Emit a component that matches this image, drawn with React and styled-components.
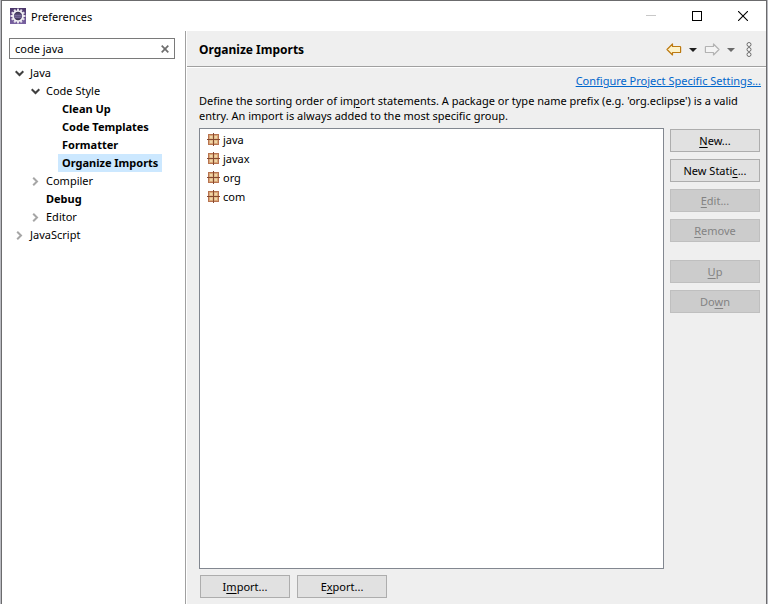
import React, { useState } from "react";
import styled, { createGlobalStyle, css } from "styled-components";

const ink = "#000000";
const face = "#efefef";
const line = "#a0a0a0";

const GlobalStyle = createGlobalStyle`
  *, *::before, *::after { box-sizing: border-box; }
  body {
    margin: 0;
    background: #b9bac0;
    color: ${ink};
    font: 11px/15px "Noto Sans", "Open Sans", sans-serif;
  }
  button, input { font: inherit; color: inherit; }
`;

const Window = styled.div`
  display: flex;
  flex-direction: column;
  min-height: 100vh;
  margin: 0 1px;
  background: #ffffff;
  border: 1px solid #6b6b6d;
  border-bottom: 0;
`;

const TitleBar = styled.header`
  display: flex;
  align-items: center;
  height: 30px;
  padding-left: 8px;
  gap: 5px;
`;

const WindowTitle = styled.h1`
  flex: 1;
  margin: 0;
  font-size: 11px;
  font-weight: 400;
`;

const CaptionButton = styled.button`
  display: grid;
  place-items: center;
  width: 46px;
  height: 28px;
  padding: 0;
  border: 0;
  background: none;
`;

const CaptionButtons = styled.div`
  display: flex;
`;

const Body = styled.div`
  display: flex;
  flex: 1;
`;

const Sidebar = styled.aside`
  width: 184px;
  flex: none;
  padding: 7px 10px 0 7px;
  border-right: 1px solid ${line};
`;

const SearchBox = styled.div`
  display: flex;
  align-items: center;
  height: 21px;
  border: 1px solid #7a7a7a;
`;

const SearchInput = styled.input`
  flex: 1;
  min-width: 0;
  padding: 0 5px;
  border: 0;
  outline: 0;
  background: none;
`;

const ClearButton = styled.button`
  display: grid;
  place-items: center;
  width: 18px;
  height: 19px;
  padding: 0;
  border: 0;
  background: none;
`;

const Tree = styled.ul`
  margin: 5px 0 0;
  padding: 0;
  list-style: none;
`;

const TreeRow = styled.li`
  display: flex;
  align-items: center;
  height: 18px;
  padding-left: ${(p) => 4 + p.$level * 16}px;
`;

const Twisty = styled.span`
  display: grid;
  place-items: center;
  width: 13px;
  height: 18px;
`;

const TreeLabel = styled.span`
  height: 18px;
  padding: 0 4px;
  line-height: 17px;
  white-space: nowrap;
  ${(p) => p.$bold && css`font-weight: 700;`}
  ${(p) => p.$selected && css`background: #cce8ff;`}
`;

const Page = styled.main`
  display: flex;
  flex: 1;
  flex-direction: column;
  min-width: 0;
  margin-left: 1px;
  background: ${face};
`;

const PageHeader = styled.div`
  display: flex;
  align-items: center;
  justify-content: space-between;
  height: 36px;
  padding: 2px 6px 0 12px;
  border-bottom: 1px solid ${line};
  box-shadow: 0 1px 0 #ffffff;
`;

const PageTitle = styled.h2`
  margin: 0;
  font-size: 12px;
  font-weight: 700;
`;

const NavBar = styled.div`
  display: flex;
  align-items: center;
`;

const ToolButton = styled.button`
  display: grid;
  place-items: center;
  width: ${(p) => p.$width}px;
  height: 22px;
  padding: 0;
  border: 0;
  background: none;
`;

const Content = styled.div`
  display: flex;
  flex: 1;
  flex-direction: column;
  padding: 6px 5px 6px 12px;
`;

const SettingsLink = styled.a`
  align-self: flex-end;
  color: #0066cc;
  text-decoration: underline;
  white-space: nowrap;
`;

const Description = styled.p`
  margin: 5px 0;
`;

const Editor = styled.div`
  display: flex;
  flex: 1;
  gap: 6px;
  padding-right: 1px;
`;

const PackageList = styled.ul`
  flex: 1;
  margin: 0;
  padding: 1px 7px;
  border: 1px solid #828790;
  background: #ffffff;
  list-style: none;
`;

const PackageRow = styled.li`
  display: flex;
  align-items: center;
  gap: 3px;
  height: 19px;
`;

const ButtonColumn = styled.div`
  display: flex;
  flex-direction: column;
  gap: 7px;
  padding-top: 1px;
`;

const ButtonGap = styled.div`
  height: 4px;
`;

const ButtonRow = styled.div`
  display: flex;
  gap: 7px;
  padding: 6px 1px 0;
`;

const PushButton = styled.button`
  width: 90px;
  height: 23px;
  padding: 0;
  border: 1px solid #adadad;
  background: #e1e1e1;
  text-align: center;
  &:disabled {
    border-color: #bfbfbf;
    background: #cccccc;
    color: #838383;
  }
`;

const Mnemonic = styled.span`
  text-decoration: underline;
  text-underline-offset: 2px;
`;

function Label({ text }) {
  const at = text.indexOf("&");
  if (at < 0) return text;
  return (
    <>
      {text.slice(0, at)}
      <Mnemonic>{text[at + 1]}</Mnemonic>
      {text.slice(at + 2)}
    </>
  );
}

const teeth = Array.from({ length: 12 }, (_, i) => i * 30);

function EclipseIcon() {
  return (
    <svg width="16" height="16" viewBox="0 0 16 16" aria-hidden="true">
      <defs>
        <linearGradient id="plum" x1="0" y1="0" x2="0" y2="1">
          <stop offset="0" stopColor="#4a3569" />
          <stop offset="1" stopColor="#7a63a3" />
        </linearGradient>
        <linearGradient id="moon" x1="0" y1="0" x2="0" y2="1">
          <stop offset="0" stopColor="#2c2440" />
          <stop offset="0.5" stopColor="#6a5c8c" />
          <stop offset="1" stopColor="#2c2440" />
        </linearGradient>
      </defs>
      <rect width="16" height="16" fill="url(#plum)" />
      {teeth.map((a) => (
        <rect key={a} x="7" y="0.6" width="2" height="2.4" fill="#e4dfea" transform={`rotate(${a} 8 8)`} />
      ))}
      <circle cx="8" cy="8" r="5" fill="url(#moon)" stroke="#f3f1f5" strokeWidth="1.7" />
      <path d="M4.5 7.5h7M4.5 9.5h7" stroke="#8778a8" strokeWidth="0.6" />
    </svg>
  );
}

function PackageIcon() {
  return (
    <svg width="13" height="13" viewBox="0 0 13 13" aria-hidden="true">
      <rect x="1.5" y="1.5" width="10" height="10" fill="#d9a777" stroke="#b87350" />
      <path d="M3 3h2v2H3zM8 3h2v2H8zM3 8h2v2H3zM8 8h2v2H8z" fill="#efd6a8" />
      <path d="M5 3h1v3H3V5h2zM7 3h1v2h2v1H7zM3 7h3v3H5V8H3zM7 7h3v1H8v2H7z" fill="#e6c08e" />
      <path d="M6.5 0v13M0 6.5h13" stroke="#85492f" />
    </svg>
  );
}

function Chevron({ open }) {
  return open ? (
    <svg width="9" height="7" viewBox="0 0 9 7" aria-hidden="true">
      <path d="M0.7 1.2l3.8 3.8 3.8-3.8" fill="none" stroke="#404040" strokeWidth="2" />
    </svg>
  ) : (
    <svg width="7" height="9" viewBox="0 0 7 9" aria-hidden="true">
      <path d="M1.2 0.7l3.8 3.8-3.8 3.8" fill="none" stroke="#a6a6a6" strokeWidth="2" />
    </svg>
  );
}

function BackArrow() {
  return (
    <svg width="16" height="13" viewBox="0 0 16 13" aria-hidden="true">
      <path d="M1 6.5L6.5 1v2.5H14q.6 0 .6.6v4.8q0 .6-.6.6H6.5V12z" fill="#fdf2c9" stroke="#bd7a11" strokeWidth="1.2" strokeLinejoin="round" />
    </svg>
  );
}

function ForwardArrow() {
  return (
    <svg width="16" height="13" viewBox="0 0 16 13" aria-hidden="true">
      <path d="M15 6.5L9.5 1v2.5H2q-.6 0-.6.6v4.8q0 .6.6.6h7.5V12z" fill="#f4f4f4" stroke="#b3b3b3" strokeWidth="1.2" strokeLinejoin="round" />
    </svg>
  );
}

function Caret({ color }) {
  return (
    <svg width="8" height="4" viewBox="0 0 8 4" aria-hidden="true">
      <path d="M0 0h8L4 4z" fill={color} />
    </svg>
  );
}

function MenuDots() {
  return (
    <svg width="6" height="15" viewBox="0 0 6 15" aria-hidden="true">
      {[2.5, 7.5, 12.5].map((y) => (
        <circle key={y} cx="3" cy={y} r="2" fill="#f6f6f6" stroke="#6d6d6d" />
      ))}
    </svg>
  );
}

const treeItems = [
  { label: "Java", level: 0, open: true },
  { label: "Code Style", level: 1, open: true },
  { label: "Clean Up", level: 2, bold: true },
  { label: "Code Templates", level: 2, bold: true },
  { label: "Formatter", level: 2, bold: true },
  { label: "Organize Imports", level: 2, bold: true, selected: true },
  { label: "Compiler", level: 1, open: false },
  { label: "Debug", level: 1, bold: true },
  { label: "Editor", level: 1, open: false },
  { label: "JavaScript", level: 0, open: false },
];

const packages = ["java", "javax", "org", "com"];

export default function App() {
  const [query, setQuery] = useState("code java");

  return (
    <>
      <GlobalStyle />
      <Window>
        <TitleBar>
          <EclipseIcon />
          <WindowTitle>Preferences</WindowTitle>
          <CaptionButtons>
            <CaptionButton aria-label="Minimize" disabled>
              <svg width="10" height="10" viewBox="0 0 10 10">
                <path d="M0 4.5h10" stroke="#c8c8c8" />
              </svg>
            </CaptionButton>
            <CaptionButton aria-label="Maximize">
              <svg width="10" height="10" viewBox="0 0 10 10">
                <rect x="0.5" y="0.5" width="9" height="9" fill="none" stroke="#000" />
              </svg>
            </CaptionButton>
            <CaptionButton aria-label="Close">
              <svg width="10" height="10" viewBox="0 0 10 10">
                <path d="M0 0l10 10M10 0L0 10" stroke="#000" strokeWidth="1.1" />
              </svg>
            </CaptionButton>
          </CaptionButtons>
        </TitleBar>
        <Body>
          <Sidebar>
            <SearchBox>
              <SearchInput
                type="text"
                aria-label="Filter preferences"
                value={query}
                onChange={(e) => setQuery(e.target.value)}
              />
              <ClearButton aria-label="Clear" onClick={() => setQuery("")}>
                <svg width="8" height="8" viewBox="0 0 8 8">
                  <path d="M0.7 0.7l6.6 6.6M7.3 0.7L0.7 7.3" stroke="#6e6e6e" strokeWidth="1.7" />
                </svg>
              </ClearButton>
            </SearchBox>
            <Tree>
              {treeItems.map((item) => (
                <TreeRow key={item.label} $level={item.level}>
                  <Twisty>{item.open !== undefined && <Chevron open={item.open} />}</Twisty>
                  <TreeLabel $bold={item.bold} $selected={item.selected}>
                    {item.label}
                  </TreeLabel>
                </TreeRow>
              ))}
            </Tree>
          </Sidebar>
          <Page>
            <PageHeader>
              <PageTitle>Organize Imports</PageTitle>
              <NavBar>
                <ToolButton $width={20} aria-label="Back"><BackArrow /></ToolButton>
                <ToolButton $width={17} aria-label="Back history"><Caret color="#1e1e1e" /></ToolButton>
                <ToolButton $width={22} aria-label="Forward" disabled><ForwardArrow /></ToolButton>
                <ToolButton $width={15} aria-label="Forward history"><Caret color="#6a6a6a" /></ToolButton>
                <ToolButton $width={22} aria-label="Menu"><MenuDots /></ToolButton>
              </NavBar>
            </PageHeader>
            <Content>
              <SettingsLink href="#project-settings">Configure Project Specific Settings...</SettingsLink>
              <Description>
                <Label text="Define the sorting order of im&port statements. A package or type name prefix (e.g. 'org.eclipse') is a valid entry. An import is always added to the most specific group." />
              </Description>
              <Editor>
                <PackageList>
                  {packages.map((name) => (
                    <PackageRow key={name}>
                      <PackageIcon />
                      {name}
                    </PackageRow>
                  ))}
                </PackageList>
                <ButtonColumn>
                  <PushButton><Label text="&New..." /></PushButton>
                  <PushButton><Label text="New Stati&c..." /></PushButton>
                  <PushButton disabled><Label text="&Edit..." /></PushButton>
                  <PushButton disabled><Label text="&Remove" /></PushButton>
                  <ButtonGap />
                  <PushButton disabled><Label text="&Up" /></PushButton>
                  <PushButton disabled><Label text="Do&wn" /></PushButton>
                </ButtonColumn>
              </Editor>
              <ButtonRow>
                <PushButton><Label text="I&mport..." /></PushButton>
                <PushButton><Label text="E&xport..." /></PushButton>
              </ButtonRow>
            </Content>
          </Page>
        </Body>
      </Window>
    </>
  );
}
